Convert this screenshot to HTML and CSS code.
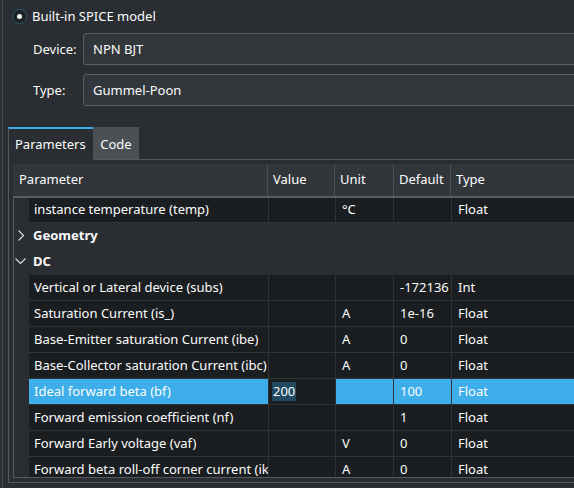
FILE: index.html
```html
<!DOCTYPE html>
<html>
<head>
<meta charset="utf-8">
<link rel="stylesheet" href="styles.css">
</head>
<body>
<div class="group">
  <div class="radio-row">
    <span class="radio"><span class="dot"></span></span>
    <span>Built-in SPICE model</span>
  </div>
  <div class="form">
    <div class="form-row"><span class="label">Device:</span><div class="field">NPN BJT</div></div>
    <div class="form-row"><span class="label">Type:</span><div class="field">Gummel-Poon</div></div>
  </div>
  <div class="tabs">
    <div class="tabbar">
      <div class="tab active">Parameters</div>
      <div class="tab">Code</div>
      <div class="tab-fill"></div>
    </div>
    <div class="pane">
      <div class="table">
        <div class="thead">
          <div class="h c1">Parameter</div>
          <div class="h c2">Value</div>
          <div class="h c3">Unit</div>
          <div class="h c4">Default</div>
          <div class="h c5">Type</div>
        </div>
        <div class="tbody">
          <div class="row first">
            <div class="indent"></div>
            <div class="cell c1">instance temperature (temp)</div>
            <div class="cell c2"></div>
            <div class="cell c3">°C</div>
            <div class="cell c4"></div>
            <div class="cell c5">Float</div>
          </div>
          <div class="cat">
            <div class="chev"><svg width="15" height="26" viewBox="0 0 15 26"><path d="M4.5 7.5 L9.5 12.5 L4.5 17.5" fill="none" stroke="#dfe0e1" stroke-width="1.1"/></svg></div>
            <div class="cat-name">Geometry</div>
          </div>
          <div class="cat">
            <div class="chev"><svg width="15" height="26" viewBox="0 0 15 26"><path d="M1.5 9.5 L6.5 14.5 L11.5 9.5" fill="none" stroke="#dfe0e1" stroke-width="1.1"/></svg></div>
            <div class="cat-name">DC</div>
          </div>
          <div class="row">
            <div class="indent"></div>
            <div class="cell c1">Vertical or Lateral device (subs)</div>
            <div class="cell c2"></div>
            <div class="cell c3"></div>
            <div class="cell c4">-172136</div>
            <div class="cell c5">Int</div>
          </div>
          <div class="row">
            <div class="indent"></div>
            <div class="cell c1">Saturation Current (is_)</div>
            <div class="cell c2"></div>
            <div class="cell c3">A</div>
            <div class="cell c4">1e-16</div>
            <div class="cell c5">Float</div>
          </div>
          <div class="row">
            <div class="indent"></div>
            <div class="cell c1">Base-Emitter saturation Current (ibe)</div>
            <div class="cell c2"></div>
            <div class="cell c3">A</div>
            <div class="cell c4">0</div>
            <div class="cell c5">Float</div>
          </div>
          <div class="row">
            <div class="indent"></div>
            <div class="cell c1">Base-Collector saturation Current (ibc)</div>
            <div class="cell c2"></div>
            <div class="cell c3">A</div>
            <div class="cell c4">0</div>
            <div class="cell c5">Float</div>
          </div>
          <div class="row selected">
            <div class="indent"></div>
            <div class="cell c1">Ideal forward beta (bf)</div>
            <div class="cell c2 editor"><span class="sel">200</span></div>
            <div class="cell c3"></div>
            <div class="cell c4">100</div>
            <div class="cell c5">Float</div>
          </div>
          <div class="row">
            <div class="indent"></div>
            <div class="cell c1">Forward emission coefficient (nf)</div>
            <div class="cell c2"></div>
            <div class="cell c3"></div>
            <div class="cell c4">1</div>
            <div class="cell c5">Float</div>
          </div>
          <div class="row">
            <div class="indent"></div>
            <div class="cell c1">Forward Early voltage (vaf)</div>
            <div class="cell c2"></div>
            <div class="cell c3">V</div>
            <div class="cell c4">0</div>
            <div class="cell c5">Float</div>
          </div>
          <div class="row">
            <div class="indent"></div>
            <div class="cell c1">Forward beta roll-off corner current (ikf)</div>
            <div class="cell c2"></div>
            <div class="cell c3">A</div>
            <div class="cell c4">0</div>
            <div class="cell c5">Float</div>
          </div>
        </div>
      </div>
    </div>
  </div>
</div>
</body>
</html>
```
FILE: styles.css
```css
* { box-sizing: border-box; }
html, body { margin: 0; padding: 0; }
body {
  width: 574px;
  height: 488px;
  overflow: hidden;
  background: #2a2e32;
  color: #fcfcfc;
  font-family: "Noto Sans", sans-serif;
  font-size: 13px;
  line-height: 18px;
}
.group {
  margin-left: 2px;
  border-left: 1px solid #494d52;
  width: 640px;
  height: 488px;
}
.radio-row {
  display: flex;
  align-items: center;
  gap: 5px;
  padding-left: 9px;
  padding-top: 7px;
  height: 25px;
}
.radio {
  width: 15px;
  height: 15px;
  border-radius: 50%;
  border: 1px solid #2b5870;
  background: #1d2124;
  display: flex;
  align-items: center;
  justify-content: center;
}
.dot {
  width: 5px;
  height: 5px;
  border-radius: 50%;
  background: #f4f4f4;
}
.form {
  display: flex;
  flex-direction: column;
  gap: 9px;
  padding-left: 30px;
  margin-top: 8px;
}
.form-row {
  display: flex;
  align-items: center;
}
.label { width: 50px; }
.field {
  flex: 1;
  height: 32px;
  background: #32373b;
  border: 1px solid #5b5f64;
  border-radius: 3px;
  padding-left: 9px;
  display: flex;
  align-items: center;
}
.tabs {
  margin-top: 21px;
  margin-left: 5px;
}
.tabbar {
  display: flex;
  height: 33px;
}
.tab {
  height: 33px;
  padding-top: 8px;
  border-bottom: 1px solid #55595e;
}
.tab.active {
  width: 85px;
  border-left: 1px solid #55595e;
  border-top: 2px solid #3daee9;
  border-bottom: none;
  padding-left: 6px;
  padding-top: 6px;
}
.tab:nth-child(2) {
  width: 46px;
  background: #4b5055;
  text-align: center;
}
.tab-fill {
  flex: 1;
  border-bottom: 1px solid #55595e;
}
.pane {
  border-left: 1px solid #55595e;
  border-bottom: 1px solid #55595e;
  padding: 4px 0 4px 4px;
}
.thead {
  display: flex;
  height: 34px;
  background: #31363b;
  border-bottom: 2px solid #5a5e63;
}
.h {
  height: 32px;
  padding-top: 6px;
  padding-left: 5px;
  border-right: 1px solid #4c5055;
  white-space: nowrap;
}
.h.c1 { width: 255px; padding-left: 6px; }
.h.c2 { width: 67px; }
.h.c3 { width: 59px; }
.h.c4 { width: 57px; }
.h.c5 { flex: 1; border-right: none; }
.tbody {
  height: 280px;
  overflow: hidden;
  border-left: 1px solid #55595e;
  border-bottom: 1px solid #55595e;
  background: #2a2e32;
}
.row {
  display: flex;
  height: 26px;
}
.row.first { margin-top: -1px; }
.indent { width: 15px; flex: none; }
.cell {
  height: 26px;
  background: #1b1e20;
  border-right: 1px solid #303438;
  border-bottom: 1px solid #303438;
  padding-left: 6px;
  padding-top: 3px;
  white-space: nowrap;
  overflow: hidden;
  flex: none;
}
.cell.c1 { width: 240px; padding-left: 5px; }
.cell.c2 { width: 67px; }
.cell.c3 { width: 58px; }
.cell.c4 { width: 58px; }
.cell.c5 { flex: 1; border-right: none; }
.row.selected .cell { background: #3daee9; }
.row.selected .cell.editor { background: #1b1e20; padding-left: 3px; }
.sel {
  background: #1f4a61;
  display: inline-block;
  padding: 0 1px;
  line-height: 19px;
}
.cat {
  display: flex;
  height: 26px;
}
.chev { width: 15px; height: 26px; flex: none; }
.chev svg { display: block; }
.cat-name {
  font-weight: bold;
  padding-left: 4px;
  padding-top: 3px;
}
```
